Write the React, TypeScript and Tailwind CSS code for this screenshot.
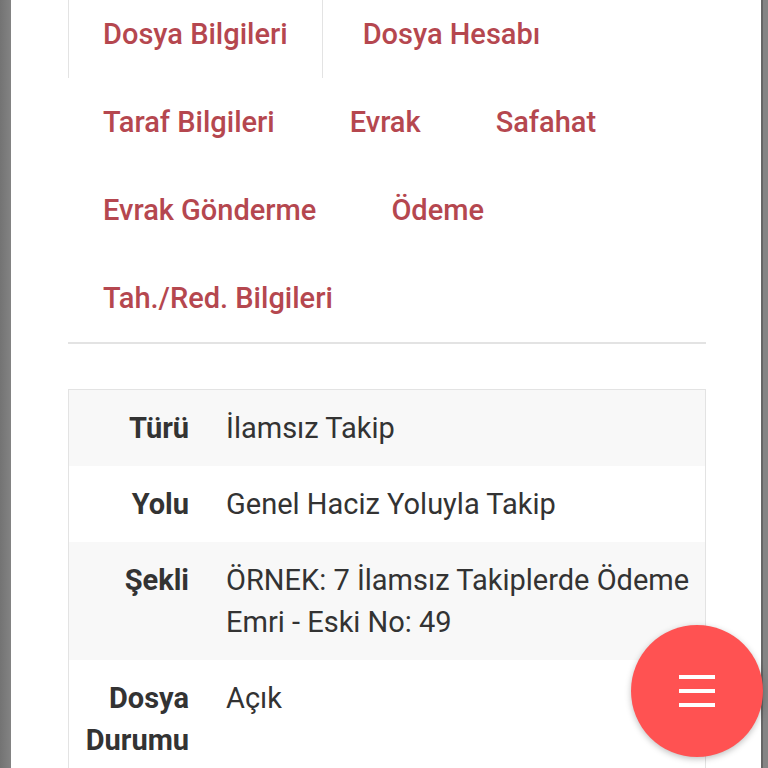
import { useState } from "react";

const tabRows = [
  ["Dosya Bilgileri", "Dosya Hesabı"],
  ["Taraf Bilgileri", "Evrak", "Safahat"],
  ["Evrak Gönderme", "Ödeme"],
  ["Tah./Red. Bilgileri"],
];

const details = [
  { label: "Türü", value: "İlamsız Takip" },
  { label: "Yolu", value: "Genel Haciz Yoluyla Takip" },
  { label: "Şekli", value: "ÖRNEK: 7 İlamsız Takiplerde Ödeme Emri - Eski No: 49" },
  { label: "Dosya Durumu", value: "Açık" },
];

export default function App() {
  const [active, setActive] = useState("Dosya Bilgileri");

  return (
    <div
      className="relative flex w-[768px] h-[768px] overflow-hidden bg-white text-[#333]"
      style={{ fontFamily: "Roboto, 'Noto Sans', sans-serif" }}
    >
      {/* left edge of the drawer */}
      <div className="w-[11px] shrink-0 bg-gradient-to-r from-[#737373] to-[#838383]" />

      <div className="flex-1 pl-[57px] pr-[55px]">
        {/* Tabs */}
        <ul className="mt-[-10px] flex flex-col border-b-2 border-[#e3e3e3]">
          {tabRows.map((row, i) => (
            <li key={i} className="flex">
              {row.map((t) => (
                <button
                  key={t}
                  onClick={() => setActive(t)}
                  className={`h-[88px] mr-[5px] px-[34px] border-x text-[29px] leading-[42px] font-medium text-[#b5474f] whitespace-nowrap ${
                    active === t ? "border-[#e3e3e3]" : "border-transparent"
                  }`}
                >
                  {t}
                </button>
              ))}
            </li>
          ))}
        </ul>

        {/* Details */}
        <div className="mt-[45px] border border-[#e3e3e3] border-b-0">
          {details.map((d, i) => (
            <div key={d.label} className={`flex ${i % 2 === 0 ? "bg-[#f8f8f8]" : "bg-white"}`}>
              <div className="w-[138px] shrink-0 pl-[14px] pr-[18px] py-[17px] text-right text-[29px] leading-[42px] font-bold">
                {d.label}
              </div>
              <div className="flex-1 pl-[19px] pr-[14px] py-[17px] text-[29px] leading-[42px]">
                {d.value}
              </div>
            </div>
          ))}
        </div>
      </div>

      {/* right edge */}
      <div className="w-[7px] shrink-0 flex">
        <div className="w-[2px] bg-[#666]" />
        <div className="flex-1 bg-[#858585]" />
      </div>

      {/* FAB */}
      <button className="absolute left-[631px] top-[625px] w-[132px] h-[132px] rounded-full bg-[#ff5252] shadow-[0_2px_6px_rgba(0,0,0,0.25)] flex flex-col items-center justify-center gap-[10px]">
        <span className="block w-[36px] h-[4px] bg-white" />
        <span className="block w-[36px] h-[4px] bg-white" />
        <span className="block w-[36px] h-[4px] bg-white" />
      </button>
    </div>
  );
}
